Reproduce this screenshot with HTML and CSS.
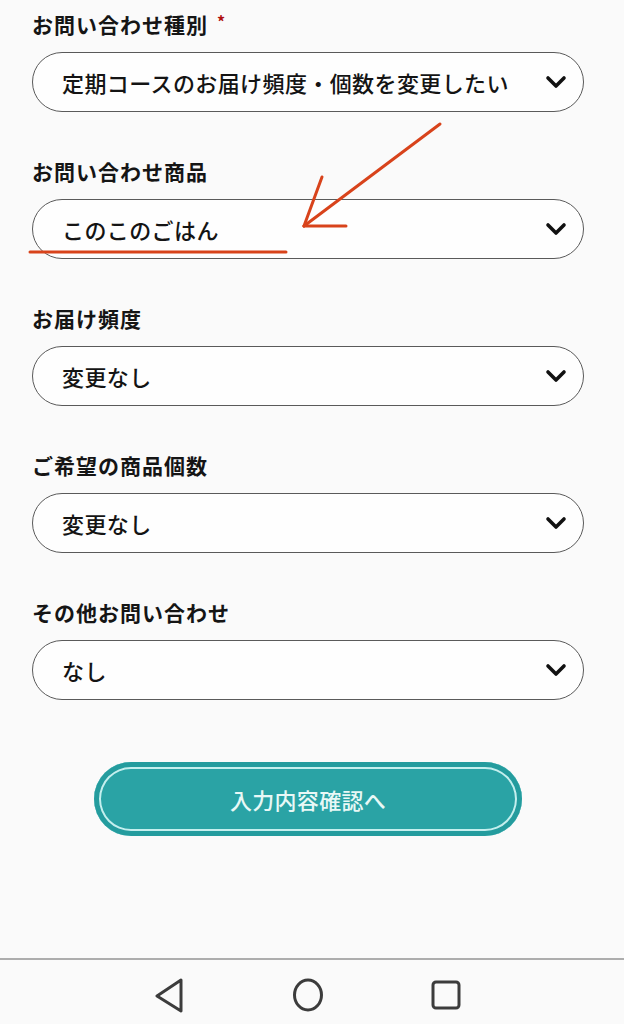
FILE: index.html
```html
<!DOCTYPE html>
<html lang="ja">
<head>
<meta charset="utf-8">
<link rel="stylesheet" href="styles.css">
</head>
<body>
<div class="page">
  <main class="form">
    <div class="field">
      <div class="label">お問い合わせ種別<span class="req">*</span></div>
      <div class="select"><span class="value">定期コースのお届け頻度・個数を変更したい</span><svg class="chev" width="22" height="14" viewBox="0 0 22 14"><polyline points="3,3 11,11 19,3"/></svg></div>
    </div>
    <div class="field">
      <div class="label">お問い合わせ商品</div>
      <div class="select"><span class="value">このこのごはん</span><svg class="chev" width="22" height="14" viewBox="0 0 22 14"><polyline points="3,3 11,11 19,3"/></svg></div>
    </div>
    <div class="field">
      <div class="label">お届け頻度</div>
      <div class="select"><span class="value">変更なし</span><svg class="chev" width="22" height="14" viewBox="0 0 22 14"><polyline points="3,3 11,11 19,3"/></svg></div>
    </div>
    <div class="field">
      <div class="label">ご希望の商品個数</div>
      <div class="select"><span class="value">変更なし</span><svg class="chev" width="22" height="14" viewBox="0 0 22 14"><polyline points="3,3 11,11 19,3"/></svg></div>
    </div>
    <div class="field">
      <div class="label">その他お問い合わせ</div>
      <div class="select"><span class="value">なし</span><svg class="chev" width="22" height="14" viewBox="0 0 22 14"><polyline points="3,3 11,11 19,3"/></svg></div>
    </div>
    <div class="actions">
      <button class="submit">入力内容確認へ</button>
    </div>
  </main>
  <nav class="navbar">
    <svg class="nav-icon" width="32" height="36" viewBox="0 0 32 36"><polygon points="27,3 3,19 27,34" /></svg>
    <svg class="nav-icon" width="34" height="36" viewBox="0 0 34 36"><ellipse cx="17" cy="18" rx="13.5" ry="15" /></svg>
    <svg class="nav-icon" width="32" height="32" viewBox="0 0 32 32"><rect x="3" y="3" width="26" height="26" rx="3" /></svg>
  </nav>
  <svg class="annot" width="624" height="1024" viewBox="0 0 624 1024">
    <line x1="440" y1="124" x2="304" y2="226"/>
    <line x1="322" y1="177" x2="304" y2="226"/>
    <line x1="304" y1="226" x2="346" y2="226"/>
    <line x1="30" y1="252" x2="286" y2="252"/>
  </svg>
</div>
</body>
</html>
```
FILE: styles.css
```css
html, body {
  margin: 0;
  padding: 0;
  background: #fafafa;
}
body {
  font-family: "Noto Sans CJK JP", "Noto Sans", sans-serif;
  color: #1a1a1a;
}
.page {
  position: relative;
  width: 624px;
  height: 1024px;
  display: flex;
  flex-direction: column;
  overflow: hidden;
}
.form {
  flex: 1;
  padding: 10px 40px 0 32px;
}
.field {
  margin-bottom: 45px;
}
.field:last-of-type {
  margin-bottom: 0;
}
.label {
  font-size: 21px;
  font-weight: 700;
  line-height: 28px;
  height: 28px;
  margin-bottom: 14px;
  letter-spacing: 1px;
  color: #151515;
}
.req {
  color: #b01010;
  font-size: 16px;
  margin-left: 9px;
  vertical-align: top;
  position: relative;
  top: -3px;
}
.select {
  box-sizing: border-box;
  height: 60px;
  border: 1.5px solid #5a5a5a;
  border-radius: 30px;
  background: #fefefe;
  display: flex;
  align-items: center;
  justify-content: space-between;
  padding: 0 16px 0 29px;
}
.value {
  font-size: 22px;
  font-weight: 500;
  color: #141414;
  letter-spacing: 0.4px;
}
.chev polyline {
  fill: none;
  stroke: #111;
  stroke-width: 3.6;
  stroke-linecap: round;
  stroke-linejoin: round;
}
.actions {
  display: flex;
  justify-content: center;
  margin-top: 62px;
}
.submit {
  width: 428px;
  height: 74px;
  border: none;
  border-radius: 37px;
  background: #2aa3a5;
  box-shadow: inset 0 0 0 5px #249c9e, inset 0 0 0 7px #c4efee;
  color: #e8f8f6;
  font-family: "Noto Sans CJK JP", "Noto Sans", sans-serif;
  font-size: 22px;
  font-weight: 500;
  letter-spacing: 0.3px;
  padding: 0;
}
.navbar {
  height: 58px;
  padding: 6px 8px 0 0;
  border-top: 2px solid #adadad;
  background: #fafafa;
  display: flex;
  align-items: center;
  justify-content: center;
  gap: 105px;
}
.nav-icon polygon,
.nav-icon ellipse,
.nav-icon rect {
  fill: none;
  stroke: #3c3c3c;
  stroke-width: 3;
  stroke-linejoin: round;
}
.annot {
  position: absolute;
  left: 0;
  top: 0;
  pointer-events: none;
}
.annot line {
  stroke: #d8431b;
  stroke-width: 3;
  stroke-linecap: round;
}
```
